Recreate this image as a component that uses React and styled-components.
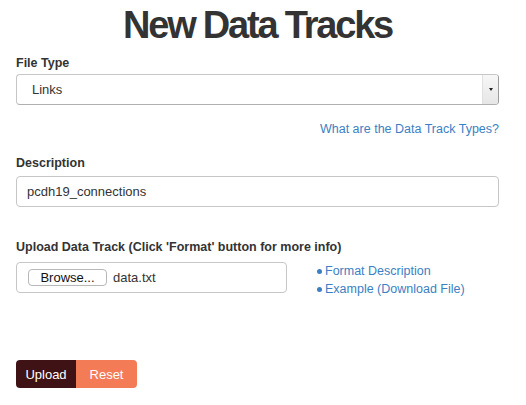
import React, { useState } from 'react'
import styled, { createGlobalStyle } from 'styled-components'

const GlobalStyle = createGlobalStyle`
  body {
    margin: 0;
    background: #fff;
    font-family: "Liberation Sans", Arial, sans-serif;
    color: #333;
  }
`;

const Page = styled.div`
  width: 483px;
  margin-left: 16px;
  padding-top: 4px;
  display: flex;
  flex-direction: column;
`;

const Title = styled.h1`
  margin: 0;
  font-size: 38px;
  line-height: 43px;
  font-weight: bold;
  letter-spacing: -2.2px;
  text-align: center;
  color: #333;
`;

const Label = styled.label`
  display: block;
  font-size: 12.5px;
  line-height: 16px;
  font-weight: bold;
  color: #333;
  margin-top: ${({ gap }) => gap}px;
  margin-bottom: ${({ below }) => below}px;
`;

const SelectBox = styled.div`
  height: 31px;
  box-sizing: border-box;
  border: 1px solid #c6c6c6;
  border-right-color: #9a9a9a;
  border-bottom-color: #b0b0b0;
  border-radius: 4px;
  display: flex;
  align-items: center;
  overflow: hidden;
  font-size: 13px;
  cursor: pointer;
`;

const SelectValue = styled.span`
  flex: 1;
  padding-left: 15px;
`;

const Caret = styled.span`
  width: 15px;
  align-self: stretch;
  background: linear-gradient(#f7f7f7, #e6e6e6);
  border-left: 1px solid #e0e0e0;
  display: flex;
  align-items: center;
  justify-content: center;
  &::after {
    content: '';
    border-left: 2.5px solid transparent;
    border-right: 2.5px solid transparent;
    border-top: 3px solid #222;
  }
`;

const HelpRow = styled.div`
  display: flex;
  justify-content: flex-end;
  margin-top: 16px;
  line-height: 16px;
`;

const Link = styled.a`
  color: #3b7fc4;
  font-size: 12.5px;
  text-decoration: none;
  cursor: pointer;
`;

const TextInput = styled.input`
  height: 31px;
  box-sizing: border-box;
  width: 100%;
  border: 1px solid #c6c6c6;
  border-radius: 4px;
  padding: 0 10px;
  font-family: inherit;
  font-size: 13px;
  color: #333;
  outline: none;
`;

const UploadRow = styled.div`
  display: flex;
  align-items: flex-start;
  gap: 30px;
`;

const FileBox = styled.div`
  width: 271px;
  height: 31px;
  box-sizing: border-box;
  border: 1px solid #c6c6c6;
  border-radius: 4px;
  display: flex;
  align-items: center;
  padding-left: 11px;
  gap: 6px;
  font-size: 13px;
`;

const BrowseButton = styled.button`
  width: 79px;
  height: 17px;
  box-sizing: border-box;
  border: 1px solid #b8b8b8;
  border-radius: 4px;
  background: #fff;
  font-family: inherit;
  font-size: 13px;
  color: #111;
  padding: 0;
  line-height: 15px;
`;

const LinkList = styled.ul`
  margin: 0;
  padding: 0;
  list-style: none;
  display: flex;
  flex-direction: column;
`;

const LinkItem = styled.li`
  display: flex;
  align-items: center;
  gap: 3px;
  line-height: 18px;
  &::before {
    content: '';
    width: 5px;
    height: 5px;
    border-radius: 50%;
    background: #3b7fc4;
  }
`;

const ButtonGroup = styled.div`
  display: flex;
  margin-top: 62px;
`;

const ActionButton = styled.button`
  height: 28px;
  width: ${({ w }) => w}px;
  border: 0;
  background: ${({ bg }) => bg};
  color: #fff;
  font-family: inherit;
  font-size: 13px;
  padding: 0;
  cursor: pointer;
  &:first-child { border-radius: 4px 0 0 4px; }
  &:last-child { border-radius: 0 4px 4px 0; }
`;

export default function App() {
  const [desc, setDesc] = useState('pcdh19_connections');
  return (
    <>
      <GlobalStyle />
      <Page>
        <Title>New Data Tracks</Title>

        <Label gap={8} below={3}>File Type</Label>
        <SelectBox>
          <SelectValue>Links</SelectValue>
          <Caret />
        </SelectBox>
        <HelpRow>
          <Link>What are the Data Track Types?</Link>
        </HelpRow>

        <Label gap={18} below={5}>Description</Label>
        <TextInput value={desc} onChange={e => setDesc(e.target.value)} />

        <Label gap={32} below={7}>Upload Data Track (Click 'Format' button for more info)</Label>
        <UploadRow>
          <FileBox>
            <BrowseButton>Browse...</BrowseButton>
            <span>data.txt</span>
          </FileBox>
          <LinkList>
            <LinkItem><Link>Format Description</Link></LinkItem>
            <LinkItem><Link>Example (Download File)</Link></LinkItem>
          </LinkList>
        </UploadRow>

        <ButtonGroup>
          <ActionButton w={60} bg="#3f1216">Upload</ActionButton>
          <ActionButton w={61} bg="#f37b56">Reset</ActionButton>
        </ButtonGroup>
      </Page>
    </>
  );
}
